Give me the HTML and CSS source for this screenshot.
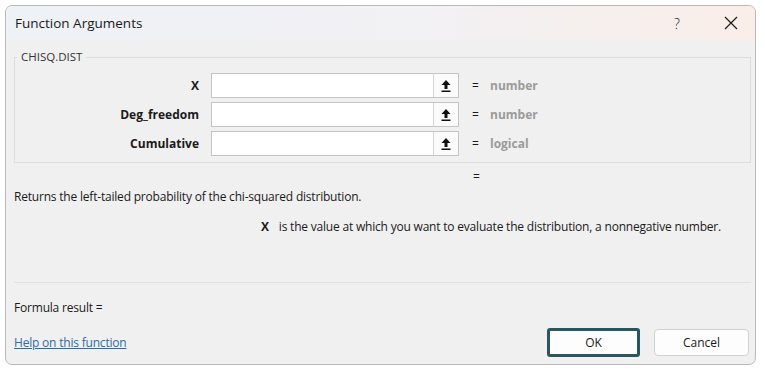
FILE: index.html
```html
<!DOCTYPE html>
<html lang="en">

<head>
    <meta charset="UTF-8">
    <title>Function Arguments</title>
    <link rel="stylesheet" href="styles.css">
</head>

<body>
    <div class="dialog">
        <div class="titlebar">
            <span class="title">Function Arguments</span>
            <span class="title-actions">
                <span class="help-btn">?</span>
                <svg class="close-btn" width="14" height="14" viewBox="0 0 14 14">
                    <path d="M1 1 L13 13 M13 1 L1 13" stroke="#1a1a1a" stroke-width="1.2" fill="none"/>
                </svg>
            </span>
        </div>

        <div class="content">
            <fieldset class="group">
                <legend>CHISQ.DIST</legend>

                <div class="arg-row">
                    <label class="arg-name" for="arg_x">X</label>
                    <div class="arg-box">
                        <input type="text" id="arg_x">
                        <span class="ref-btn">
                            <svg width="10" height="12" viewBox="0 0 10 12"><path d="M5 0 L9.5 5 L6.5 5 L6.5 9 L3.5 9 L3.5 5 L0.5 5 Z M0.5 10.5 H9.5 V12 H0.5 Z" fill="#111"/></svg>
                        </span>
                    </div>
                    <span class="eq">=</span>
                    <span class="arg-value">number</span>
                </div>

                <div class="arg-row">
                    <label class="arg-name" for="arg_df">Deg_freedom</label>
                    <div class="arg-box">
                        <input type="text" id="arg_df">
                        <span class="ref-btn">
                            <svg width="10" height="12" viewBox="0 0 10 12"><path d="M5 0 L9.5 5 L6.5 5 L6.5 9 L3.5 9 L3.5 5 L0.5 5 Z M0.5 10.5 H9.5 V12 H0.5 Z" fill="#111"/></svg>
                        </span>
                    </div>
                    <span class="eq">=</span>
                    <span class="arg-value">number</span>
                </div>

                <div class="arg-row">
                    <label class="arg-name" for="arg_cum">Cumulative</label>
                    <div class="arg-box">
                        <input type="text" id="arg_cum">
                        <span class="ref-btn">
                            <svg width="10" height="12" viewBox="0 0 10 12"><path d="M5 0 L9.5 5 L6.5 5 L6.5 9 L3.5 9 L3.5 5 L0.5 5 Z M0.5 10.5 H9.5 V12 H0.5 Z" fill="#111"/></svg>
                        </span>
                    </div>
                    <span class="eq">=</span>
                    <span class="arg-value">logical</span>
                </div>
            </fieldset>

            <div class="result-eq">=</div>

            <div class="description">
                <p class="summary">Returns the left-tailed probability of the chi-squared distribution.</p>
                <p class="arg-help"><b>X</b><span>is the value at which you want to evaluate the distribution, a nonnegative number.</span></p>
            </div>

            <hr class="separator">

            <div class="formula-result">Formula result =</div>

            <div class="footer">
                <a href="#" class="help-link">Help on this function</a>
                <div class="buttons">
                    <button class="btn btn-ok">OK</button>
                    <button class="btn">Cancel</button>
                </div>
            </div>
        </div>
    </div>
</body>

</html>
```

FILE: styles.css
```css
body {
    margin: 0;
    background-color: #ffffff;
    font-family: "Open Sans", "Noto Sans", sans-serif;
    font-size: 12px;
    color: #1a1a1a;
}

.dialog {
    margin: 5px 0 0 5px;
    width: 751px;
    box-sizing: border-box;
    border: 1px solid #b9b9b9;
    border-radius: 7px;
    overflow: hidden;
    background-color: #f0f0f0;
}

.titlebar {
    height: 34px;
    display: flex;
    align-items: center;
    justify-content: space-between;
    padding: 0 17px 0 9px;
    background: linear-gradient(90deg, #eef1f6 0%, #f2f1f4 55%, #f9ede8 100%);
}

.title {
    font-size: 13.5px;
    color: #1a1a1a;
}

.title-actions {
    display: flex;
    align-items: center;
    gap: 44px;
}

.help-btn {
    font-size: 14px;
    font-weight: 300;
}

.content {
    padding: 0 4px 7px 8px;
}

.group {
    margin: 10px 0 0 0;
    padding: 9px 0 6px 0;
    border: 1px solid #dcdcdc;
    min-width: 0;
}

.group legend {
    margin-left: 2px;
    padding: 0 4px;
    font-size: 11.5px;
    line-height: 14px;
    color: #333;
}

.arg-row {
    display: flex;
    align-items: center;
    height: 25px;
    margin-bottom: 4px;
}

.arg-row:last-child {
    margin-bottom: 0;
}

.arg-name {
    width: 184px;
    text-align: right;
    font-weight: bold;
    margin-right: 12px;
}

.arg-box {
    display: flex;
    width: 248px;
    height: 25px;
    box-sizing: border-box;
    border: 1px solid #c4c4c4;
    background-color: white;
}

.arg-box input {
    flex: 1;
    border: none;
    outline: none;
    padding: 0 4px;
    min-width: 0;
}

.ref-btn {
    width: 24px;
    display: flex;
    align-items: center;
    justify-content: center;
    border-left: 1px solid #d4d4d4;
    background-color: #fbfbfb;
}

.eq {
    margin-left: 13px;
    width: 18px;
}

.arg-value {
    font-weight: bold;
    color: #9b9b9b;
}

.result-eq {
    margin: 6px 0 0 459px;
    line-height: 16px;
}

.description {
    height: 93px;
    letter-spacing: -0.2px;
}

.description p {
    margin: 0;
    line-height: 16px;
}

.summary {
    margin-top: 4px !important;
}

.arg-help {
    margin-top: 14px !important;
    padding-left: 247px;
}

.arg-help b {
    margin-right: 10px;
}

.separator {
    margin: 0;
    border: none;
    border-top: 1px solid #e2e2e2;
}

.formula-result {
    margin-top: 17px;
    line-height: 16px;
    letter-spacing: -0.2px;
}

.footer {
    margin-top: 12px;
    display: flex;
    align-items: center;
    justify-content: space-between;
}

.help-link {
    color: #2d6ca5;
    text-decoration: underline;
    letter-spacing: -0.2px;
}

.buttons {
    display: flex;
    align-items: center;
    gap: 14px;
    margin-right: 2px;
}

.btn {
    width: 95px;
    height: 27px;
    background-color: #fdfdfd;
    border: 1px solid #d0d0d0;
    border-radius: 4px;
    font-family: inherit;
    font-size: 12px;
    color: #1a1a1a;
}

.btn-ok {
    width: 93px;
    height: 29px;
    border: 3px solid #2a5663;
    border-radius: 3px;
}
```
